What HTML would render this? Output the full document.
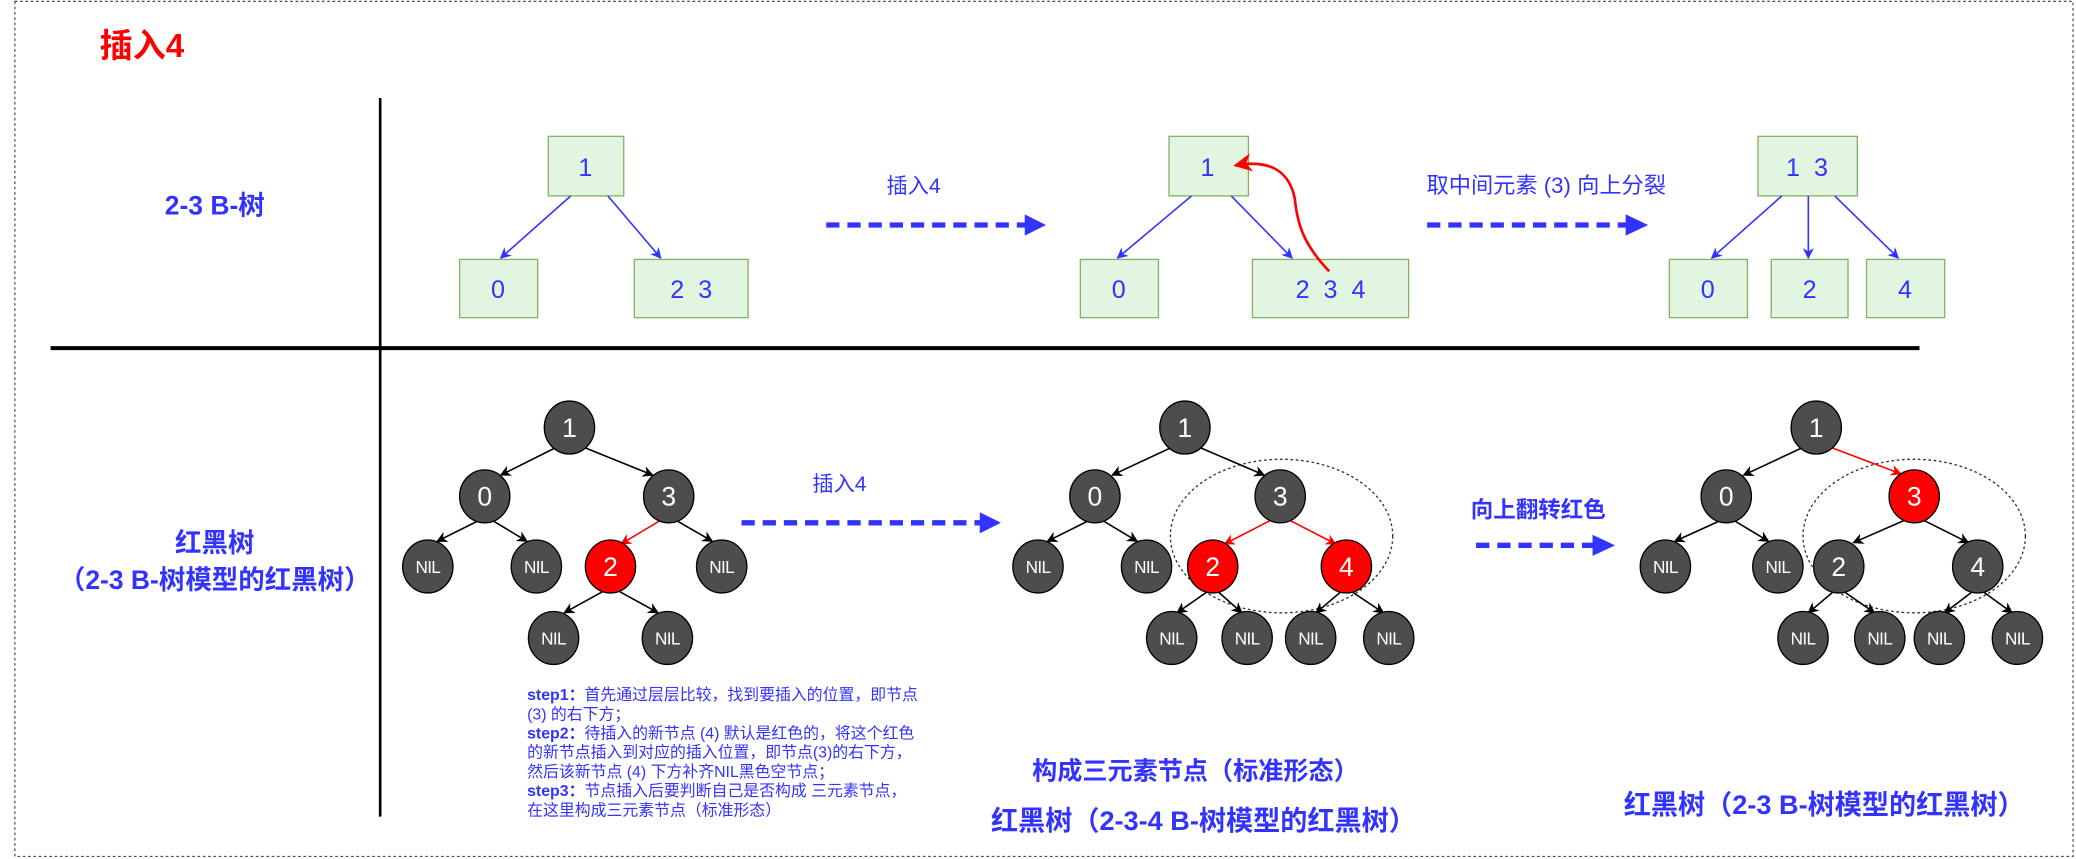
<!DOCTYPE html>
<html><head><meta charset="utf-8"><style>
html,body{margin:0;padding:0;background:#fff;width:2076px;height:859px;overflow:hidden}
svg{display:block}
text{font-family:"Liberation Sans","Noto Sans CJK SC",sans-serif}
</style></head><body>
<svg width="2076" height="859" viewBox="0 0 1568 649" xmlns="http://www.w3.org/2000/svg">
<defs>
<marker id="ab" viewBox="0 0 10 10" refX="9" refY="5" markerWidth="7" markerHeight="7" orient="auto"><path d="M0,0 L10,5 L0,10 L3,5z" fill="#3333ff"/></marker>
<marker id="ak" viewBox="0 0 10 10" refX="9" refY="5" markerWidth="7" markerHeight="7" orient="auto"><path d="M0,0 L10,5 L0,10 L3,5z" fill="#000"/></marker>
<marker id="ar" viewBox="0 0 10 10" refX="9" refY="5" markerWidth="7" markerHeight="7" orient="auto"><path d="M0,0 L10,5 L0,10 L3,5z" fill="#f00"/></marker>
</defs>
<rect x="11" y="1" width="1555" height="646" fill="none" stroke="#333" stroke-width="0.8" stroke-dasharray="2,2"/>
<text x="75" y="43" font-size="25" font-weight="bold" fill="#f00">插入4</text>
<line x1="287" y1="74" x2="287" y2="617" stroke="#000" stroke-width="2"/>
<line x1="38" y1="263" x2="1450" y2="263" stroke="#000" stroke-width="3"/>
<g fill="#3333ff" font-weight="bold" text-anchor="middle">
<text x="162" y="162" font-size="20">2-3 B-树</text>
<text x="162" y="417" font-size="20">红黑树</text>
<text x="162" y="445" font-size="20">（2-3 B-树模型的红黑树）</text>
<text x="903" y="589" font-size="19">构成三元素节点（标准形态）</text>
<text x="909" y="627" font-size="20.5">红黑树（2-3-4 B-树模型的红黑树）</text>
<text x="1162" y="391" font-size="17">向上翻转红色</text>
<text x="1378" y="615" font-size="20.5">红黑树（2-3 B-树模型的红黑树）</text>
</g>
<g fill="#3333ff" font-size="16" text-anchor="middle">
<text x="690" y="146">插入4</text>
<text x="1168" y="146" font-size="16.8">取中间元素 (3) 向上分裂</text>
<text x="634" y="371">插入4</text>
</g>
<g stroke="#3333ff" stroke-width="4" stroke-dasharray="10,6">
<line x1="624" y1="170" x2="776" y2="170"/><line x1="1078" y1="170" x2="1230" y2="170"/>
<line x1="560" y1="395" x2="742" y2="395"/><line x1="1115" y1="412" x2="1205" y2="412"/>
</g>
<g fill="#3333ff"><path d="M774,162 L790,170 L774,178z"/><path d="M1228,162 L1245,170 L1228,178z"/><path d="M740,387 L756,395 L740,403z"/><path d="M1203,404 L1220,412 L1203,420z"/></g>
<g fill="#e2f5e0" stroke="#82b366" stroke-width="1">
<rect x="414" y="103" width="57" height="45"/><rect x="347" y="196" width="59" height="44"/><rect x="479" y="196" width="86" height="44"/>
<rect x="883" y="103" width="60" height="45"/><rect x="816" y="196" width="59" height="44"/><rect x="946" y="196" width="118" height="44"/>
<rect x="1328" y="103" width="75" height="45"/><rect x="1261" y="196" width="59" height="44"/><rect x="1338" y="196" width="58" height="44"/><rect x="1410" y="196" width="59" height="44"/>
</g>
<g fill="#3333ff" font-size="19" text-anchor="middle">
<text x="442" y="133">1</text><text x="376" y="225">0</text><text x="522" y="225">2 &#160;3</text>
<text x="912" y="133">1</text><text x="845" y="225">0</text><text x="1005" y="225">2 &#160;3 &#160;4</text>
<text x="1365" y="133">1 &#160;3</text><text x="1290" y="225">0</text><text x="1367" y="225">2</text><text x="1439" y="225">4</text>
</g>
<g stroke="#3333ff" stroke-width="1.2" marker-end="url(#ab)">
<line x1="431" y1="148" x2="378" y2="195"/><line x1="459" y1="148" x2="499" y2="195"/>
<line x1="900" y1="148" x2="844" y2="195"/><line x1="930" y1="148" x2="976" y2="195"/>
<line x1="1346" y1="148" x2="1293" y2="195"/><line x1="1366" y1="148" x2="1366" y2="195"/><line x1="1386" y1="148" x2="1434" y2="195"/>
</g>
<path d="M1004,205 C985,185 980,170 978,150 C974,130 960,120 933,125" fill="none" stroke="#f00" stroke-width="2" marker-end="url(#ar)"/>
<ellipse cx="968" cy="405" rx="84" ry="58" fill="none" stroke="#333" stroke-dasharray="2,2"/>
<ellipse cx="1446" cy="405" rx="84" ry="58" fill="none" stroke="#333" stroke-dasharray="2,2"/>
<g stroke="#000" stroke-width="1.2" marker-end="url(#ak)">
<line x1="420" y1="338" x2="378" y2="359"/><line x1="441" y1="338" x2="493" y2="359"/>
<line x1="360" y1="394" x2="330" y2="409"/><line x1="373" y1="394" x2="398" y2="409"/><line x1="512" y1="394" x2="538" y2="409"/>
<line x1="455" y1="447" x2="426" y2="463"/><line x1="468" y1="447" x2="497" y2="463"/>
<line x1="885" y1="338" x2="840" y2="359"/><line x1="906" y1="338" x2="955" y2="359"/>
<line x1="821" y1="394" x2="791" y2="409"/><line x1="834" y1="394" x2="859" y2="409"/>
<line x1="912" y1="447" x2="889" y2="463"/><line x1="920" y1="447" x2="938" y2="463"/>
<line x1="1013" y1="447" x2="994" y2="463"/><line x1="1021" y1="447" x2="1045" y2="463"/>
<line x1="1362" y1="338" x2="1317" y2="359"/>
<line x1="1298" y1="394" x2="1265" y2="409"/><line x1="1311" y1="394" x2="1336" y2="409"/>
<line x1="1439" y1="393" x2="1400" y2="410"/><line x1="1453" y1="393" x2="1487" y2="410"/>
<line x1="1385" y1="447" x2="1366" y2="463"/><line x1="1393" y1="447" x2="1416" y2="463"/>
<line x1="1490" y1="447" x2="1469" y2="463"/><line x1="1498" y1="447" x2="1520" y2="463"/>
</g>
<g stroke="#f00" stroke-width="1.2" marker-end="url(#ar)">
<line x1="499" y1="393" x2="469" y2="411"/>
<line x1="960" y1="393" x2="925" y2="411"/><line x1="974" y1="393" x2="1009" y2="411"/>
<line x1="1383" y1="338" x2="1436" y2="358"/>
</g>
<g stroke="#000" stroke-width="1">
<g fill="#4d4d4d">
<ellipse cx="430" cy="323" rx="19" ry="20"/><ellipse cx="366" cy="375" rx="19" ry="20"/><ellipse cx="505" cy="375" rx="19" ry="20"/>
<ellipse cx="323" cy="428" rx="19" ry="20"/><ellipse cx="405" cy="428" rx="19" ry="20"/><ellipse cx="545" cy="428" rx="19" ry="20"/>
<ellipse cx="418" cy="482" rx="19" ry="20"/><ellipse cx="504" cy="482" rx="19" ry="20"/>
<ellipse cx="895" cy="323" rx="19" ry="20"/><ellipse cx="827" cy="375" rx="19" ry="20"/><ellipse cx="967" cy="375" rx="19" ry="20"/>
<ellipse cx="784" cy="428" rx="19" ry="20"/><ellipse cx="866" cy="428" rx="19" ry="20"/>
<ellipse cx="885" cy="482" rx="19" ry="20"/><ellipse cx="942" cy="482" rx="19" ry="20"/><ellipse cx="990" cy="482" rx="19" ry="20"/><ellipse cx="1049" cy="482" rx="19" ry="20"/>
<ellipse cx="1372" cy="323" rx="19" ry="20"/><ellipse cx="1304" cy="375" rx="19" ry="20"/>
<ellipse cx="1258" cy="428" rx="19" ry="20"/><ellipse cx="1343" cy="428" rx="19" ry="20"/><ellipse cx="1389" cy="428" rx="19" ry="20"/><ellipse cx="1494" cy="428" rx="19" ry="20"/>
<ellipse cx="1362" cy="482" rx="19" ry="20"/><ellipse cx="1420" cy="482" rx="19" ry="20"/><ellipse cx="1465" cy="482" rx="19" ry="20"/><ellipse cx="1524" cy="482" rx="19" ry="20"/>
</g>
<g fill="#f00">
<ellipse cx="461" cy="428" rx="19" ry="20"/><ellipse cx="916" cy="428" rx="19" ry="20"/><ellipse cx="1017" cy="428" rx="19" ry="20"/><ellipse cx="1446" cy="375" rx="19" ry="20"/>
</g>
</g>
<g fill="#fff" text-anchor="middle" font-size="20">
<text x="430" y="330">1</text><text x="366" y="382">0</text><text x="505" y="382">3</text><text x="461" y="435">2</text>
<text x="895" y="330">1</text><text x="827" y="382">0</text><text x="967" y="382">3</text><text x="916" y="435">2</text><text x="1017" y="435">4</text>
<text x="1372" y="330">1</text><text x="1304" y="382">0</text><text x="1446" y="382">3</text><text x="1389" y="435">2</text><text x="1494" y="435">4</text>
</g>
<g fill="#fff" text-anchor="middle" font-size="13" letter-spacing="-0.5">
<text x="323" y="433">NIL</text><text x="405" y="433">NIL</text><text x="545" y="433">NIL</text><text x="418" y="487">NIL</text><text x="504" y="487">NIL</text>
<text x="784" y="433">NIL</text><text x="866" y="433">NIL</text><text x="885" y="487">NIL</text><text x="942" y="487">NIL</text><text x="990" y="487">NIL</text><text x="1049" y="487">NIL</text>
<text x="1258" y="433">NIL</text><text x="1343" y="433">NIL</text><text x="1362" y="487">NIL</text><text x="1420" y="487">NIL</text><text x="1465" y="487">NIL</text><text x="1524" y="487">NIL</text>
</g>
<g fill="#3333ff" font-size="12">
<text x="398" y="529"><tspan font-weight="bold">step1：</tspan>首先通过层层比较，找到要插入的位置，即节点</text>
<text x="398" y="543.5">(3) 的右下方；</text>
<text x="398" y="558"><tspan font-weight="bold">step2：</tspan>待插入的新节点 (4) 默认是红色的，将这个红色</text>
<text x="398" y="572.5">的新节点插入到对应的插入位置，即节点(3)的右下方，</text>
<text x="398" y="587">然后该新节点 (4) 下方补齐NIL黑色空节点；</text>
<text x="398" y="601.5"><tspan font-weight="bold">step3：</tspan>节点插入后要判断自己是否构成 三元素节点，</text>
<text x="398" y="616">在这里构成三元素节点（标准形态）</text>
</g>
</svg>
</body></html>
